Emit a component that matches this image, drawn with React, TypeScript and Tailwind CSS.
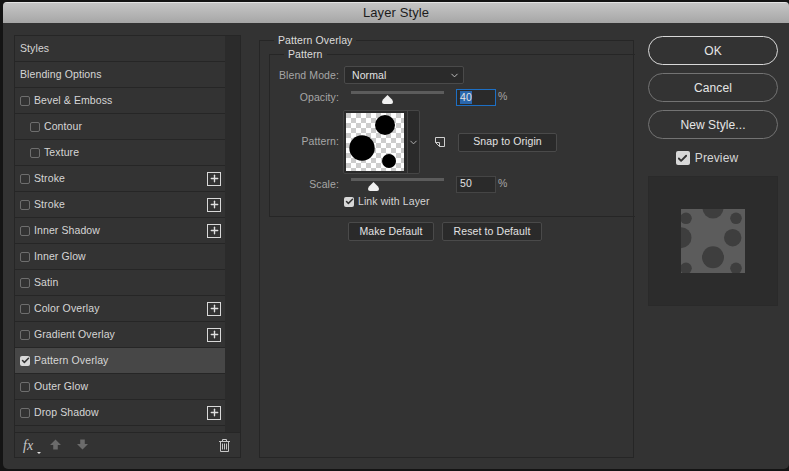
import { Check, ChevronDown, Plus } from "lucide-react";

type Row = { label: string; check?: boolean; indent?: boolean; plus?: boolean; on?: boolean };

const rows: Row[] = [
  { label: "Styles" },
  { label: "Blending Options" },
  { label: "Bevel & Emboss", check: true },
  { label: "Contour", check: true, indent: true },
  { label: "Texture", check: true, indent: true },
  { label: "Stroke", check: true, plus: true },
  { label: "Stroke", check: true, plus: true },
  { label: "Inner Shadow", check: true, plus: true },
  { label: "Inner Glow", check: true },
  { label: "Satin", check: true },
  { label: "Color Overlay", check: true, plus: true },
  { label: "Gradient Overlay", check: true, plus: true },
  { label: "Pattern Overlay", check: true, on: true },
  { label: "Outer Glow", check: true },
  { label: "Drop Shadow", check: true, plus: true },
];

const CheckBox = ({ on }: { on?: boolean }) =>
  on ? (
    <div className="w-[10px] h-[10px] rounded-[2px] bg-[#d8d8d8] flex items-center justify-center shrink-0">
      <Check size={9} strokeWidth={4} className="text-[#333333]" />
    </div>
  ) : (
    <div className="w-[10px] h-[10px] rounded-[2px] border border-[#6e6e6e] shrink-0" />
  );

const StyleRow = ({ row }: { row: Row }) => (
  <div
    className={`h-[26px] flex items-center border-b border-[#262626] pr-[4px] ${
      row.on ? "bg-[#474747]" : ""
    } ${row.indent ? "pl-[15px]" : "pl-[5px]"}`}
  >
    {row.check && <CheckBox on={row.on} />}
    <span className={`text-[#d6d6d6] ${row.check ? "ml-[4px]" : ""}`}>{row.label}</span>
    {row.plus && (
      <div className="ml-auto w-[14px] h-[14px] border border-[#d8d8d8] flex items-center justify-center">
        <Plus size={11} strokeWidth={3} className="text-[#e0e0e0]" />
      </div>
    )}
  </div>
);

const Slider = ({ pos }: { pos: string }) => (
  <div className="relative w-[93px] h-[3px] bg-[#5c5c5c] mt-[-6px]">
    <svg className={`absolute top-[4px] ${pos}`} width="11" height="9" viewBox="0 0 11 9">
      <path d="M5.5 0 L10 4.5 Q11 6 11 7 Q11 9 9 9 L2 9 Q0 9 0 7 Q0 6 1 4.5 Z" fill="#f0f0f0" />
    </svg>
  </div>
);

const SmallButton = ({ label, width }: { label: string; width: string }) => (
  <div
    className={`h-[19px] rounded-[2px] border border-[#4a4a4a] bg-[#2a2a2a] flex items-center justify-center text-[#e2e2e2] ${width}`}
  >
    {label}
  </div>
);

const BigButton = ({ label, primary }: { label: string; primary?: boolean }) => (
  <div
    className={`h-[29px] rounded-full border flex items-center justify-center text-[12px] text-[#e6e6e6] ${
      primary ? "border-[#d8d8d8]" : "border-[#737373]"
    }`}
  >
    {label}
  </div>
);

const PatternSwatch = () => (
  <svg width="58" height="58" viewBox="0 0 58 58">
    <defs>
      <pattern id="checks" width="10" height="10" patternUnits="userSpaceOnUse">
        <rect width="10" height="10" fill="#ffffff" />
        <rect width="5" height="5" fill="#cccccc" />
        <rect x="5" y="5" width="5" height="5" fill="#cccccc" />
      </pattern>
    </defs>
    <rect width="58" height="58" fill="url(#checks)" />
    <circle cx="16" cy="35" r="12.7" fill="#000" />
    <circle cx="39" cy="12" r="10" fill="#000" />
    <circle cx="43" cy="48" r="7" fill="#000" />
  </svg>
);

const PreviewSwatch = () => (
  <svg width="64" height="64" viewBox="0 0 64 64">
    <rect width="64" height="64" fill="#5c5c5c" />
    <g fill="#3e3e3e">
      <circle cx="32" cy="-1" r="10.5" />
      <circle cx="5" cy="9.3" r="5.8" />
      <circle cx="55" cy="9.3" r="5.8" />
      <circle cx="0" cy="28.7" r="10.5" />
      <circle cx="51.7" cy="28.7" r="8.7" />
      <circle cx="32" cy="48.3" r="11" />
      <circle cx="5" cy="59.3" r="5.8" />
      <circle cx="55" cy="59.3" r="5.8" />
    </g>
  </svg>
);

export default function App() {
  return (
    <div className="w-[789px] h-[471px] bg-[#141414] pl-[3px] pt-[2px] overflow-hidden font-['Liberation_Sans',sans-serif] text-[10.5px] tracking-[0.1px]">
      <div className="w-[786px] h-[467px] rounded-t-[4px] rounded-b-[5px] bg-[#333333] flex flex-col overflow-hidden">
        <div className="h-[21px] shrink-0 border-t border-[#e4e4e4] bg-gradient-to-b from-[#c6c6c6] to-[#a6a6a6] flex items-center justify-center text-[13px] text-[#1c1c1c]">
          Layer Style
        </div>

        <div className="flex flex-1 pl-[11px] pt-[12px]">
          {/* left styles list */}
          <div className="w-[227px] h-[423px] border border-[#262626] flex flex-col shrink-0">
            <div className="flex flex-1 min-h-0 bg-[#2b2b2b]">
              <div className="w-[210px] bg-[#333333]">
                {rows.map((row, i) => (
                  <StyleRow key={i} row={row} />
                ))}
              </div>
            </div>
            <div className="h-[25px] border-t border-[#262626] flex items-center pl-[8px] pr-[10px] text-[#c8c8c8]">
              <div className="relative w-[18px] text-[14px] italic font-['Liberation_Serif',serif]">
                fx
                <div className="absolute left-[14px] top-[17px] w-0 h-0 border-x-[2px] border-x-transparent border-t-[2px] border-t-[#e0e0e0]" />
              </div>
              <svg className="ml-[9px]" width="11" height="12" viewBox="0 0 12 12">
                <path d="M6 0 L12 6 L8.5 6 L8.5 11 L3.5 11 L3.5 6 L0 6 Z" fill="#6b6b6b" />
              </svg>
              <svg className="ml-[16px]" width="11" height="12" viewBox="0 0 12 12">
                <path d="M3.5 0 L8.5 0 L8.5 5 L12 5 L6 11 L0 5 L3.5 5 Z" fill="#6b6b6b" />
              </svg>
              <svg className="ml-auto" width="11" height="13" viewBox="0 0 11 13" fill="none" stroke="#c8c8c8">
                <path d="M0 2.5 H11 M3.5 2.5 V0.5 H7.5 V2.5 M1.5 2.5 V12.5 H9.5 V2.5 M3.5 4.5 V10.5 M5.5 4.5 V10.5 M7.5 4.5 V10.5" />
              </svg>
            </div>
          </div>

          {/* center settings */}
          <div className="w-[375px] h-[418px] ml-[18px] mt-[5px] border border-[#262626] shrink-0 relative pl-[9px] pt-[13px]">
            <span className="absolute left-[14px] top-[-8px] px-[4px] bg-[#333333] text-[#dcdcdc]">Pattern Overlay</span>
            <div className="relative w-[366px] h-[163px] border border-[#262626] border-r-0 pt-[10px]">
              <span className="absolute left-[14px] top-[-8px] px-[4px] bg-[#333333] text-[#dcdcdc]">Pattern</span>

              <div className="flex items-center h-[20px]">
                <span className="w-[69px] pt-[2px] text-right text-[#a6a6a6]">Blend Mode:</span>
                <div className="ml-[5px] w-[120px] h-[18px] rounded-[2px] border border-[#4a4a4a] bg-[#2a2a2a] flex items-center justify-between pl-[7px] pr-[3px] text-[#e2e2e2]">
                  <span className="pt-[2px]">Normal</span>
                  <ChevronDown size={11} className="text-[#c8c8c8]" />
                </div>
              </div>

              <div className="flex items-center h-[20px] mt-[2px]">
                <span className="w-[69px] pt-[2px] text-right text-[#a6a6a6]">Opacity:</span>
                <div className="ml-[12px]">
                  <Slider pos="left-[31px]" />
                </div>
                <div className="ml-[12px] w-[40px] h-[17px] border border-[#1d6fc4] bg-[#2a2a2a] flex items-center pl-[3px] text-[#e2e2e2]">
                  <span className="bg-[#2a67ad] leading-[13px]">40</span>
                </div>
                <span className="ml-[2px] text-[#a6a6a6]">%</span>
              </div>

              <div className="flex items-center h-[64px] mt-[3px]">
                <span className="w-[69px] text-right text-[#a6a6a6]">Pattern:</span>
                <div className="ml-[4px] h-[64px] w-[77px] rounded-[2px] border border-[#454545] bg-[#2a2a2a] flex items-center pl-[2px]">
                  <PatternSwatch />
                  <div className="ml-[3px] h-full border-l border-[#454545] flex-1 flex items-center justify-center">
                    <ChevronDown size={11} className="text-[#b8b8b8]" />
                  </div>
                </div>
                <svg className="ml-[15px]" width="10" height="10" viewBox="0 0 10 10" fill="none" stroke="#d0d0d0">
                  <path d="M0.5 0.5 H9.5 V9.5 H4.5 L0.5 5.5 Z M4.5 9.5 V5.5 H0.5" />
                </svg>
                <div className="ml-[13px]">
                  <SmallButton label="Snap to Origin" width="w-[99px]" />
                </div>
              </div>

              <div className="flex items-center h-[20px]">
                <span className="w-[69px] pt-[2px] text-right text-[#a6a6a6]">Scale:</span>
                <div className="ml-[12px]">
                  <Slider pos="left-[17px]" />
                </div>
                <div className="ml-[12px] w-[40px] h-[17px] border border-[#454545] bg-[#2a2a2a] flex items-center pl-[3px] text-[#e2e2e2]">
                  50
                </div>
                <span className="ml-[2px] text-[#a6a6a6]">%</span>
              </div>

              <div className="flex items-center ml-[74px]">
                <CheckBox on />
                <span className="ml-[4px] text-[#d6d6d6]">Link with Layer</span>
              </div>
            </div>

            <div className="flex mt-[5px] ml-[79px] gap-[8px]">
              <SmallButton label="Make Default" width="w-[86px]" />
              <SmallButton label="Reset to Default" width="w-[100px]" />
            </div>
          </div>

          {/* right buttons */}
          <div className="w-[130px] ml-[14px] shrink-0">
            <div className="flex flex-col gap-[8px] mt-[1px]">
              <BigButton label="OK" primary />
              <BigButton label="Cancel" />
              <BigButton label="New Style..." />
            </div>
            <div className="flex items-center justify-center mt-[11px] h-[16px] text-[12px] text-[#d6d6d6] pr-[12px]">
              <div className="w-[14px] h-[14px] rounded-[2px] bg-[#d8d8d8] flex items-center justify-center">
                <Check size={11} strokeWidth={4} className="text-[#333333]" />
              </div>
              <span className="ml-[5px]">Preview</span>
            </div>
            <div className="mt-[10px] h-[130px] border border-[#2a2a2a] bg-[#2c2c2c] flex items-center justify-center">
              <PreviewSwatch />
            </div>
          </div>
        </div>
      </div>
    </div>
  );
}
